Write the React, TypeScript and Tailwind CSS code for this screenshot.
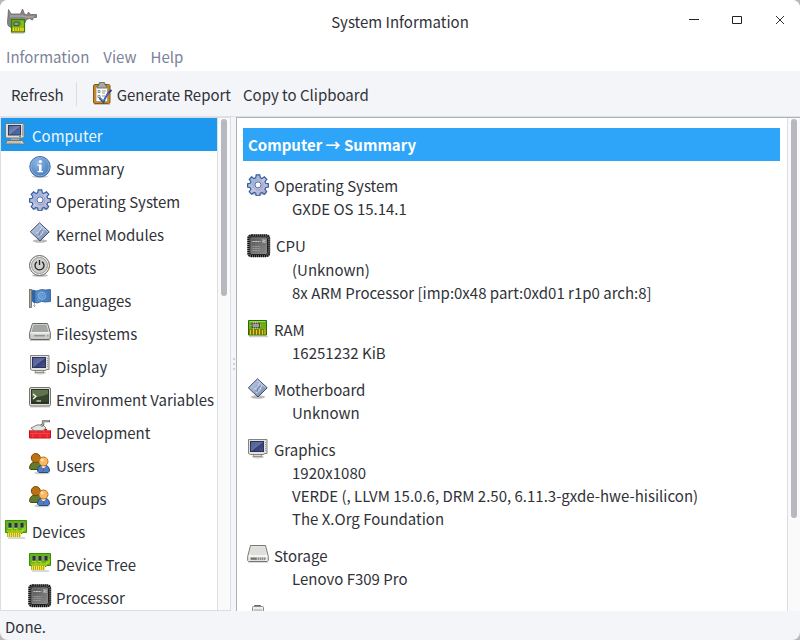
import type { ReactNode } from "react";

type Glyph = () => ReactNode;

const Svg = ({ children, size = 22 }: { children: ReactNode; size?: number }) => (
  <svg width={size} height={size} viewBox={`0 0 ${size} ${size}`} aria-hidden="true" className="shrink-0">
    {children}
  </svg>
);

const Defs = () => (
  <svg width="0" height="0" className="absolute" aria-hidden="true">
    <defs>
      <linearGradient id="screen" x1="0" y1="0" x2="1" y2="1">
        <stop offset="0" stopColor="#525c90" />
        <stop offset="0.5" stopColor="#626da2" />
        <stop offset="0.54" stopColor="#363f74" />
        <stop offset="1" stopColor="#4c568e" />
      </linearGradient>
      <linearGradient id="softScreen" x1="0" y1="0" x2="1" y2="1">
        <stop offset="0" stopColor="#4d6299" />
        <stop offset="0.5" stopColor="#7487b8" />
        <stop offset="0.54" stopColor="#4d5f96" />
        <stop offset="1" stopColor="#5c6ea6" />
      </linearGradient>
      <radialGradient id="info" cx="0.4" cy="0.3" r="0.8">
        <stop offset="0" stopColor="#8fb8e4" />
        <stop offset="1" stopColor="#3c74b8" />
      </radialGradient>
      <linearGradient id="gear" x1="0" y1="0" x2="1" y2="1">
        <stop offset="0" stopColor="#86a6d4" />
        <stop offset="0.5" stopColor="#c4c6e2" />
        <stop offset="1" stopColor="#a8a0c8" />
      </linearGradient>
      <linearGradient id="diamond" x1="0" y1="0" x2="1" y2="1">
        <stop offset="0" stopColor="#c6d2e6" />
        <stop offset="1" stopColor="#6f84ac" />
      </linearGradient>
      <linearGradient id="silver" x1="0" y1="0" x2="0" y2="1">
        <stop offset="0" stopColor="#f2f2f0" />
        <stop offset="1" stopColor="#c4c4c2" />
      </linearGradient>
      <linearGradient id="dark" x1="0" y1="0" x2="1" y2="1">
        <stop offset="0" stopColor="#555" />
        <stop offset="1" stopColor="#8c8c8c" />
      </linearGradient>
      <linearGradient id="flag" x1="0" y1="0" x2="1" y2="0">
        <stop offset="0" stopColor="#2f62a4" />
        <stop offset="0.3" stopColor="#5d94d0" />
        <stop offset="1" stopColor="#4178ba" />
      </linearGradient>
    </defs>
  </svg>
);

const ComputerIcon = () => (
  <Svg>
    <path d="M1.5 .5h16l1.5 1v12l-1.5 1.500h-16L.5 14V1.500z" fill="#deded8" stroke="#777970" />
    <rect x="3.500" y="2.500" width="12" height="9.500" fill="url(#softScreen)" stroke="#2c3866" />
    <path d="M17.500 2v11" stroke="#aaaaa4" />
    <path d="M14 13.500h2" stroke="#65a030" />
    <path d="M6 15.500h8v2H6z" fill="#aaa9a2" />
    <path d="M2.500 17.500h14.500l3 3.500H.5z" fill="#deded8" stroke="#75756d" />
    <path d="M3 19h13M2 20.300h13" stroke="#8b8b84" strokeDasharray="1.500 .5" strokeWidth=".7" />
  </Svg>
);

const InfoIcon = () => (
  <Svg>
    <ellipse cx="11" cy="20.500" rx="8" ry="1.400" fill="#0003" />
    <circle cx="11" cy="10.700" r="10.200" fill="url(#info)" stroke="#3867a5" />
    <circle cx="11" cy="10.700" r="9.200" fill="none" stroke="#9bbfe6" strokeWidth=".7" />
    <circle cx="11.300" cy="5.500" r="1.600" fill="#fff" />
    <path d="M8.500 8.500h4V15h1.500v1.300H8.500V15H10V9.800H8.500z" fill="#fff" />
  </Svg>
);

const GearIcon = () => (
  <Svg>
    <ellipse cx="12" cy="20" rx="8" ry="1.500" fill="#0003" />
    <path
      d="M9.200.8h3.600l.5 3 1.600.7L17.400 2.800l2.400 2.500-1.800 2.400.6 1.600 2.900.5v3.300l-2.900.6-.6 1.600 1.700 2.500-2.400 2.400-2.400-1.800-1.600.7-.6 2.800H9.200l-.5-2.800-1.700-.7-2.400 1.700-2.400-2.400 1.700-2.400-.7-1.600-2.700-.6V9.800l2.700-.5.7-1.600L2.200 5.300l2.400-2.500L7 4.500l1.700-.7z"
      fill="url(#gear)"
      stroke="#345f9f"
      strokeWidth="1.200"
    />
    <circle cx="11" cy="10.900" r="5" fill="none" stroke="#8e9cc4" strokeWidth=".8" />
    <circle cx="11" cy="10.900" r="3" fill="#fff" stroke="#506fa5" />
  </Svg>
);

const DiamondIcon = () => (
  <Svg>
    <ellipse cx="11" cy="19" rx="7" ry="1.800" fill="#0004" />
    <path d="M10.500.8l9.700 9-9.200 9.200-9.700-9.200z" fill="url(#diamond)" stroke="#3d4d72" />
    <path d="M10.500 2.300l8.200 7.500" stroke="#dce5f2" strokeWidth=".8" />
    <path d="M12.500 5l-1.700 4-4 2.500M14.500 7L13 12l-4 3" stroke="#d3dded" fill="none" />
    <path d="M14 8l-3 1-1 5" stroke="#6378a0" fill="none" strokeWidth=".7" />
  </Svg>
);

const PowerIcon = () => (
  <Svg>
    <ellipse cx="11" cy="20.500" rx="8" ry="1.300" fill="#0004" />
    <circle cx="10.500" cy="10.500" r="10" fill="#f0f0ef" stroke="#62645f" />
    <circle cx="10.500" cy="10.500" r="8" fill="#cfcfcd" stroke="#969694" />
    <path d="M8 6.700a4.500 4.500 0 1 0 5 0M10.500 5v5" fill="none" stroke="#222" strokeWidth="1.300" />
  </Svg>
);

const FlagIcon = () => (
  <Svg>
    <path d="M4 17l2 2M3 4l3 14" stroke="#aaa" />
    <rect x=".5" y="1.500" width="2" height="18" fill="#a8aaa5" stroke="#666861" strokeWidth=".8" />
    <path d="M3.500 2l4 1 5-1.500 4 .5 5-.5v12l-5 .5-4-.5-4.500 1.500-4.500-1.500z" fill="url(#flag)" stroke="#285894" strokeWidth=".8" />
    <circle cx="13" cy="7.800" r="3.500" fill="none" stroke="#8fb8e0" />
    <circle cx="13" cy="7.800" r="1.500" fill="none" stroke="#8fb8e0" strokeWidth=".7" />
    <path d="M5 3v12" stroke="#23569a" />
  </Svg>
);

const DriveIcon = () => (
  <Svg>
    <path d="M1 19.500h20" stroke="#0003" />
    <path d="M3.500 2.500h15l2.800 9v5.700l-1 1.300H1.700l-1-1.300v-5.700z" fill="url(#silver)" stroke="#64665f" />
    <path d="M4.500 3.500h13l2 7.500H2.500z" fill="#a3a5a2" />
    <path d="M1.500 11.800h19" stroke="#fff" />
    <path d="M5 14.800h11" stroke="#777" />
    <path d="M18 14.800h1.500" stroke="#6ba83b" />
  </Svg>
);

const MonitorIcon = () => (
  <Svg>
    <ellipse cx="11" cy="19" rx="6" ry="1.500" fill="#0003" />
    <path d="M7 16h7l1 2.500H6z" fill="#dadbd7" stroke="#83857f" strokeWidth=".8" />
    <path d="M1.500 1.500h18.500v14h-2l-2 1H3.500l-2-1z" fill="#e2e2de" stroke="#83857b" />
    <rect x="3.500" y="3.500" width="13" height="10" fill="url(#screen)" stroke="#2a3360" />
    <path d="M18.500 4v9" stroke="#9d9e98" strokeDasharray="1 1" />
  </Svg>
);

const TerminalIcon = () => (
  <Svg>
    <path d="M1 20h20" stroke="#0003" />
    <rect x=".5" y=".5" width="21" height="18.500" rx="1.500" fill="#ddded9" stroke="#72746d" />
    <rect x="2.500" y="2.500" width="17" height="14" fill="#273020" stroke="#30362b" />
    <path d="M3 4h16M3 6h16M3 8h16M3 10h16M3 12h16M3 14h16" stroke="#50663b" strokeWidth=".8" />
    <path d="M3 3h16v4q-8 4-16 3z" fill="#7b9168" opacity=".6" />
    <path d="M4 7l3 2.500L4 12M7.500 14h4.500" stroke="#fff" fill="none" strokeWidth="1.200" />
  </Svg>
);

const TrowelIcon = () => (
  <Svg>
    <path d="M.5 9.500h21v8.500H.5z" fill="#ec2630" stroke="#c90b17" />
    <path d="M1 13.500h20M7 9.500v4M15 9.500v4M4 13.500V18M11 13.500V18M18 13.500V18" stroke="#f84a52" strokeWidth=".8" />
    <path d="M0 9.500h4M18 9.500h4" stroke="#fff" strokeWidth="1.500" />
    <path d="M2 8l6-3h6l3 3-3 2.500H5z" fill="#e4e5e1" stroke="#7f817c" />
    <path d="M12 6l2-1.500V2q0-1 1-1h6" fill="none" stroke="#6c6e69" strokeWidth="2.500" />
    <path d="M12 6l2-1.500V2q0-1 1-1h5" fill="none" stroke="#d0d1ce" strokeWidth=".8" />
  </Svg>
);

const UsersIcon = () => (
  <Svg>
    <ellipse cx="13" cy="20" rx="8" ry="1.300" fill="#0003" />
    <path d="M.6 15.500q0-6.500 6-6.500t6 6.500l-1 1H1.500z" fill="#647b2c" stroke="#3d5013" />
    <circle cx="6.800" cy="5" r="4.500" fill="#bb7114" stroke="#804804" />
    <path d="M8.500 18q0-6 6-6t6 6l-1.500 1.500h-9z" fill="#4b7fc4" stroke="#224a86" />
    <path d="M12 12.500l2.500 3.500 2.500-3.500z" fill="#fff" />
    <path d="M14.500 15v3" stroke="#be3f35" />
    <circle cx="14.500" cy="8.500" r="4.500" fill="#f8b862" stroke="#c36e18" />
    <circle cx="13.300" cy="7" r="1.500" fill="#ffe0ad" />
  </Svg>
);

const CardIcon = () => (
  <Svg>
    <path d="M3 19h17" stroke="#0003" strokeWidth="1.500" />
    <path d="M.5 1.500h21v12H17v1H2.500v-1h-2z" fill="#60b51a" stroke="#399000" />
    <path d="M2 12h16V7h2v4h-3v3M3 9.500h4v3M9 9.500h3v3" fill="none" stroke="#c2d719" />
    <path d="M2.500 4h5v4.500h-5zM8.500 4h5v4.500h-5zM14.500 4h5v4.500h-5z" fill="#8c988a" />
    <path d="M3.500 4h3v4.500h-3zM9.500 4h3v4.500h-3zM15.500 4h3v4.500h-3z" fill="#26342b" />
    <path d="M3 13.500h13V18H3z" fill="#efe34a" />
    <path d="M2.500 13.500V18M4.500 13.500V18M6.500 13.500V18M8.500 13.500V18M10.500 13.500V18M12.500 13.500V18M14.500 13.500V18" stroke="#b49d0e" strokeWidth=".8" />
  </Svg>
);

const ChipIcon = () => (
  <Svg size={24}>
    <rect x=".5" y=".5" width="22.500" height="22.500" rx="3" fill="#999" />
    <rect x="1.500" y="1.500" width="20.500" height="20.500" rx="3" fill="none" stroke="#111" strokeWidth="2.500" strokeDasharray="1.400 .6" />
    <rect x="3" y="3" width="17.500" height="17.500" rx="2" fill="url(#dark)" stroke="#222" />
    <rect x="4" y="4" width="15.500" height="15.500" rx="1" fill="none" stroke="#888" strokeWidth=".7" />
    <path d="M5.500 7.500h8M15 6h3v3M15.500 8.500l2-2" stroke="#ccc" strokeWidth="1.200" fill="none" strokeDasharray="2 .5" />
    <path d="M5.500 12.500h8M5.500 14.500h8M5.500 16.500h7" stroke="#a5a5a5" strokeWidth=".8" strokeDasharray="2 .5" />
  </Svg>
);

const RamIcon = () => (
  <Svg>
    <path d="M2 18.500h19" stroke="#0003" strokeWidth="1.500" />
    <path d="M1.500 2.500h18v14.500h-18z" fill="#6ead18" stroke="#216f04" />
    <path d="M2.500 3.500h16" stroke="#a4d456" />
    <path d="M2 11h17v5.500H2z" fill="#807b05" />
    <path d="M3.500 12v4.500M6.500 11v5.500M9.500 12v4.500M12.500 11v5.500M15.500 12v4.500M18 11v5.500" stroke="#e6d020" />
    <rect x="5" y="5.500" width="7.500" height="4" fill="#9e9f99" stroke="#454b3d" />
    <path d="M6.500 4v1.500M8.500 4v1.500M10.500 4v1.500M6.500 9.500v1.500M8.500 9.500v1.500M10.500 9.500v1.500M3.500 7.500h1M13 7.500h1" stroke="#bbb" />
  </Svg>
);

const DiskIcon = () => (
  <Svg>
    <path d="M1 18.500h20" stroke="#0002" />
    <path d="M3.500 1.500h15l2.800 11v4l-1 1H1.700l-1-1v-4z" fill="#ecece9" stroke="#74766f" />
    <path d="M4.500 2.500h13l2 7-2.500 2H5l-2.500-2z" fill="#dededc" />
    <path d="M1.500 12h19" stroke="#fff" />
    <rect x="3" y="13.200" width="16" height="3" fill="#bcbdb9" />
    <path d="M4 14.700h5" stroke="#6f716b" strokeWidth="2" />
    <path d="M9 14.700h9" stroke="#858781" strokeWidth="2" strokeDasharray="1 1" />
  </Svg>
);

const BatteryIcon = () => (
  <Svg>
    <path d="M7.500 3V1.500h6V3" fill="#999" stroke="#666861" />
    <rect x="5.500" y="2.500" width="11" height="19" rx="1" fill="#ededeb" stroke="#8a8c86" />
    <path d="M7 5h8v4H7z" fill="#c6c8c3" />
  </Svg>
);

const AppIcon = () => (
  <svg width="30" height="26" viewBox="0 0 30 26" aria-hidden="true">
    <path d="M4 25h13" stroke="#0003" strokeWidth="1.500" />
    <path d="M1.500 1.500L4 6h9.500l2-5 2 5 2.500 1 1.500-3 2 2.500h6v3h-3l-1 2.500-3-1.500-3 1-2 4-2.500 4-9.500 1-4.500-3L.5 14l.5-6z" fill="#8a8484" stroke="#6b6565" strokeWidth=".8" />
    <path d="M3 8h12l4 1h8" fill="none" stroke="#aaa4a4" strokeWidth="1.500" />
    <path d="M4.500 11.500h13V24h-13z" fill="#62b01b" stroke="#347b06" strokeWidth="1.200" />
    <path d="M5 19h12v4.500H5z" fill="#9a9a08" />
    <path d="M6.500 19.500V23M9 19.500V23M11.500 19.500V23M14 19.500V23M16 19.500V23" stroke="#f0df23" strokeWidth="1.400" />
    <path d="M7 14h5v3.500H7z" fill="#8fa080" stroke="#48533c" />
    <path d="M14 14h2v4h-3" fill="none" stroke="#a4ce29" />
  </svg>
);

const ClipboardIcon = () => (
  <svg width="20" height="24" viewBox="0 0 20 24" aria-hidden="true" className="shrink-0">
    <path d="M1 22.500h16" stroke="#0003" />
    <rect x=".5" y="2.500" width="16.500" height="19" rx="1.500" fill="#c98928" stroke="#8c5810" />
    <path d="M3 4.500h11.500v15H3z" fill="#fafaf8" stroke="#9a8c74" strokeWidth=".7" />
    <path d="M6 3V1.500Q6 .5 7 .5h4q1 0 1 1V3l2 1v2H4V4z" fill="#a7aaa3" stroke="#5b5e57" strokeWidth=".8" />
    <path d="M5 8.500h2v2H5zM5 13.500h2v2H5z" fill="#fff" stroke="#777" strokeWidth=".8" />
    <path d="M9 9h4M9 11h3M9 14h3" stroke="#999" />
    <path d="M6.500 16l4 4q3-8 8-12" fill="none" stroke="#20478e" strokeWidth="2" />
    <path d="M7 16.500l3.500 2.700q2.500-6 5.500-8.500" fill="none" stroke="#5585c8" strokeWidth="1" />
  </svg>
);

type Item = { label: string; icon: Glyph; top?: boolean };

const tree: Item[] = [
  { label: "Computer", icon: ComputerIcon, top: true },
  { label: "Summary", icon: InfoIcon },
  { label: "Operating System", icon: GearIcon },
  { label: "Kernel Modules", icon: DiamondIcon },
  { label: "Boots", icon: PowerIcon },
  { label: "Languages", icon: FlagIcon },
  { label: "Filesystems", icon: DriveIcon },
  { label: "Display", icon: MonitorIcon },
  { label: "Environment Variables", icon: TerminalIcon },
  { label: "Development", icon: TrowelIcon },
  { label: "Users", icon: UsersIcon },
  { label: "Groups", icon: UsersIcon },
  { label: "Devices", icon: CardIcon, top: true },
  { label: "Device Tree", icon: CardIcon },
  { label: "Processor", icon: ChipIcon },
];

const sections: { title: string; icon: Glyph; lines: string[] }[] = [
  { title: "Operating System", icon: GearIcon, lines: ["GXDE OS 15.14.1"] },
  { title: "CPU", icon: ChipIcon, lines: ["(Unknown)", "8x ARM Processor [imp:0x48 part:0xd01 r1p0 arch:8]"] },
  { title: "RAM", icon: RamIcon, lines: ["16251232 KiB"] },
  { title: "Motherboard", icon: DiamondIcon, lines: ["Unknown"] },
  {
    title: "Graphics",
    icon: MonitorIcon,
    lines: ["1920x1080", "VERDE (, LLVM 15.0.6, DRM 2.50, 6.11.3-gxde-hwe-hisilicon)", "The X.Org Foundation"],
  },
  { title: "Storage", icon: DiskIcon, lines: ["Lenovo F309 Pro"] },
];

export default function App() {
  return (
    <div className="h-screen bg-[#b8b8b8] font-['Noto_Sans_CJK_SC',sans-serif] text-[15px] leading-[23px] text-[#303238]">
      <Defs />
      <div className="flex h-full flex-col overflow-hidden rounded-lg bg-[#f4f5f8]">
        <header className="grid h-[42px] shrink-0 grid-cols-[1fr_auto_1fr] items-center bg-white">
          <div className="pl-[7px]">
            <AppIcon />
          </div>
          <h1>System Information</h1>
          <div className="flex justify-end gap-[19px] pr-2">
            <button aria-label="Minimize" className="flex size-6 items-center justify-center">
              <svg width="12" height="12" viewBox="0 0 12 12"><path d="M1 4.500h10" stroke="#222" /></svg>
            </button>
            <button aria-label="Maximize" className="flex size-6 items-center justify-center">
              <svg width="12" height="12" viewBox="0 0 12 12"><path d="M1.500 1.500h9v7h-9z" fill="none" stroke="#222" /></svg>
            </button>
            <button aria-label="Close" className="flex size-6 items-center justify-center">
              <svg width="12" height="12" viewBox="0 0 12 12"><path d="M2 1l8 8M10 1l-8 8" stroke="#333" /></svg>
            </button>
          </div>
        </header>

        <nav className="flex h-[29px] shrink-0 items-center gap-[14px] bg-white px-[6px] text-[#7c8299]">
          <button>Information</button>
          <button>View</button>
          <button>Help</button>
        </nav>

        <div role="toolbar" className="flex h-[46px] shrink-0 items-center border-b border-[#dde1e8] px-[11px] pt-px">
          <button>Refresh</button>
          <span className="mr-4 ml-3 h-6 w-px bg-[#dadce2]" />
          <button className="mr-3 flex items-center gap-1">
            <ClipboardIcon />
            Generate Report
          </button>
          <button>Copy to Clipboard</button>
        </div>

        <div className="flex min-h-0 flex-1">
          <aside className="flex w-[231px] shrink-0 border border-[#dcdddf] bg-white">
            <ul className="min-w-0 flex-1 overflow-hidden">
              {tree.map(({ label, icon: Icon, top }, i) => (
                <li key={label}>
                  <button
                    className={`flex h-[33px] w-full items-center gap-1 whitespace-nowrap ${top ? "pl-[3px]" : "pl-[27px]"} ${
                      i === 0 ? "bg-[#1e98ee] text-[#f0f7fd]" : ""
                    }`}
                  >
                    <span className="mt-1 flex size-6 shrink-0 items-center justify-center self-start">
                      <Icon />
                    </span>
                    <span className="pt-px">{label}</span>
                  </button>
                </li>
              ))}
            </ul>
            <div className="w-[13px] shrink-0 border-l border-[#dcdddf] bg-[#fafafb] px-[3px] pt-px">
              <div className="h-[36%] rounded-full bg-[#b7b8c0]" />
            </div>
          </aside>

          <div className="flex w-[5px] shrink-0 flex-col items-center justify-center gap-[3px]">
            <i className="size-[2px] bg-[#d0d1d5]" />
            <i className="size-[2px] bg-[#d0d1d5]" />
            <i className="size-[2px] bg-[#d0d1d5]" />
          </div>

          <main className="flex min-w-0 flex-1 border-t border-l border-[#b0b1b4] bg-white">
            <div className="min-w-0 flex-1 overflow-hidden pt-[10px] pr-[7px] pl-[6px]">
              <h2 className="mb-[13px] bg-[#2ea5f8] p-[5px] font-bold text-white">Computer → Summary</h2>
              {sections.map(({ title, icon: Icon, lines }) => (
                <section key={title} className="mb-[14px] pl-1">
                  <h3 className="flex min-h-[23px] gap-[5px]">
                    <Icon />
                    {title}
                  </h3>
                  {lines.map((line) => (
                    <p key={line} className="pl-[45px]">{line}</p>
                  ))}
                </section>
              ))}
              <div className="pl-1">
                <BatteryIcon />
              </div>
            </div>
            <div className="w-[13px] shrink-0 border-l border-[#dcdddf] bg-[#fafafb] px-[3px] pt-px">
              <div className="h-[81%] rounded-full bg-[#b7b8c0]" />
            </div>
          </main>
        </div>

        <footer className="flex h-[29px] shrink-0 items-center px-[5px] pt-px">Done.</footer>
      </div>
    </div>
  );
}
